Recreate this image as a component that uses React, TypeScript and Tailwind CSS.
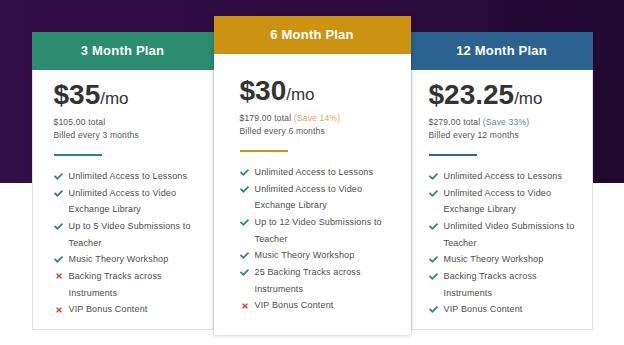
import { FaCheck, FaTimes } from "react-icons/fa";

interface Feature {
  text: string;
  included: boolean;
}

interface Plan {
  title: string;
  price: string;
  total: string;
  save?: string;
  billed: string;
  features: Feature[];
  // class strings written out in full so Tailwind picks them up
  cardClass: string;
  headerClass: string;
  bodyClass: string;
  saveClass: string;
  ruleClass: string;
}

const plans: Plan[] = [
  {
    title: "3 Month Plan",
    price: "$35",
    total: "$105.00 total",
    billed: "Billed every 3 months",
    cardClass: "mt-4 w-[182px] h-[298px]",
    headerClass: "bg-[#2b8c70]",
    bodyClass: "pl-[21px] pr-[12px] pt-[10px] border-x border-b border-[#e2e2e2]",
    saveClass: "",
    ruleClass: "bg-[#2b8c70]",
    features: [
      { text: "Unlimited Access to Lessons", included: true },
      { text: "Unlimited Access to Video Exchange Library", included: true },
      { text: "Up to 5 Video Submissions to Teacher", included: true },
      { text: "Music Theory Workshop", included: true },
      { text: "Backing Tracks across Instruments", included: false },
      { text: "VIP Bonus Content", included: false },
    ],
  },
  {
    title: "6 Month Plan",
    price: "$30",
    total: "$179.00 total",
    save: "(Save 14%)",
    billed: "Billed every 6 months",
    cardClass: "relative z-10 w-[197px] h-[319px] shadow-[0_0_5px_rgba(0,0,0,0.22)]",
    headerClass: "bg-[#cc9313]",
    bodyClass: "pl-[26px] pr-[14px] pt-[22px]",
    saveClass: "text-[#d9a857]",
    ruleClass: "bg-[#cc9313]",
    features: [
      { text: "Unlimited Access to Lessons", included: true },
      { text: "Unlimited Access to Video Exchange Library", included: true },
      { text: "Up to 12 Video Submissions to Teacher", included: true },
      { text: "Music Theory Workshop", included: true },
      { text: "25 Backing Tracks across Instruments", included: true },
      { text: "VIP Bonus Content", included: false },
    ],
  },
  {
    title: "12 Month Plan",
    price: "$23.25",
    total: "$279.00 total",
    save: "(Save 33%)",
    billed: "Billed every 12 months",
    cardClass: "mt-4 w-[182px] h-[298px]",
    headerClass: "bg-[#2b6290]",
    bodyClass: "pl-[17px] pr-[8px] pt-[10px] border-x border-b border-[#e2e2e2]",
    saveClass: "text-[#5b84b3]",
    ruleClass: "bg-[#2b6290]",
    features: [
      { text: "Unlimited Access to Lessons", included: true },
      { text: "Unlimited Access to Video Exchange Library", included: true },
      { text: "Unlimited Video Submissions to Teacher", included: true },
      { text: "Music Theory Workshop", included: true },
      { text: "Backing Tracks across Instruments", included: true },
      { text: "VIP Bonus Content", included: true },
    ],
  },
];

function PlanCard({ plan }: { plan: Plan }) {
  return (
    <div className={`flex flex-col bg-white ${plan.cardClass}`}>
      {/* Header */}
      <div
        className={`h-[38px] shrink-0 flex items-center justify-center text-white text-[13px] font-semibold tracking-[0.2px] ${plan.headerClass}`}
      >
        {plan.title}
      </div>

      <div className={`flex-1 flex flex-col ${plan.bodyClass}`}>
        {/* Price */}
        <div className="h-[30px] leading-[30px] text-[#333] whitespace-nowrap">
          <span className="text-[28px] font-bold">{plan.price}</span>
          <span className="text-[17px]">/mo</span>
        </div>

        <div className="mt-[6px] text-[8.5px] leading-[12.5px] text-[#555] tracking-[0.2px]">
          <p>
            {plan.total}
            {plan.save && <span className={plan.saveClass}> {plan.save}</span>}
          </p>
          <p>{plan.billed}</p>
        </div>

        {/* Divider */}
        <div className={`mt-[13px] w-12 h-[2px] ${plan.ruleClass}`} />

        {/* Features */}
        <ul className="mt-3 text-[9px] leading-[16.67px] text-[#4d4d4d] tracking-[0.15px]">
          {plan.features.map((f) => (
            <li key={f.text} className="flex">
              <span className="w-[15px] shrink-0 h-[16.67px] flex items-center">
                {f.included ? (
                  <FaCheck className="text-[#2b8c70]" size={9} />
                ) : (
                  <FaTimes className="text-[#d9453c] ml-[1px]" size={8} />
                )}
              </span>
              <span>{f.text}</span>
            </li>
          ))}
        </ul>
      </div>
    </div>
  );
}

export default function App() {
  return (
    <div className="relative w-full h-[345px] overflow-hidden bg-white font-['Liberation_Sans',Arial,sans-serif]">
      {/* Purple backdrop band */}
      <div className="absolute inset-x-0 top-0 h-[183px] bg-[linear-gradient(90deg,#330e48_0%,#2c0c40_60%,#21092e_100%)]" />

      <div className="relative flex justify-center items-start pt-4">
        {plans.map((p) => (
          <PlanCard key={p.title} plan={p} />
        ))}
      </div>
    </div>
  );
}
